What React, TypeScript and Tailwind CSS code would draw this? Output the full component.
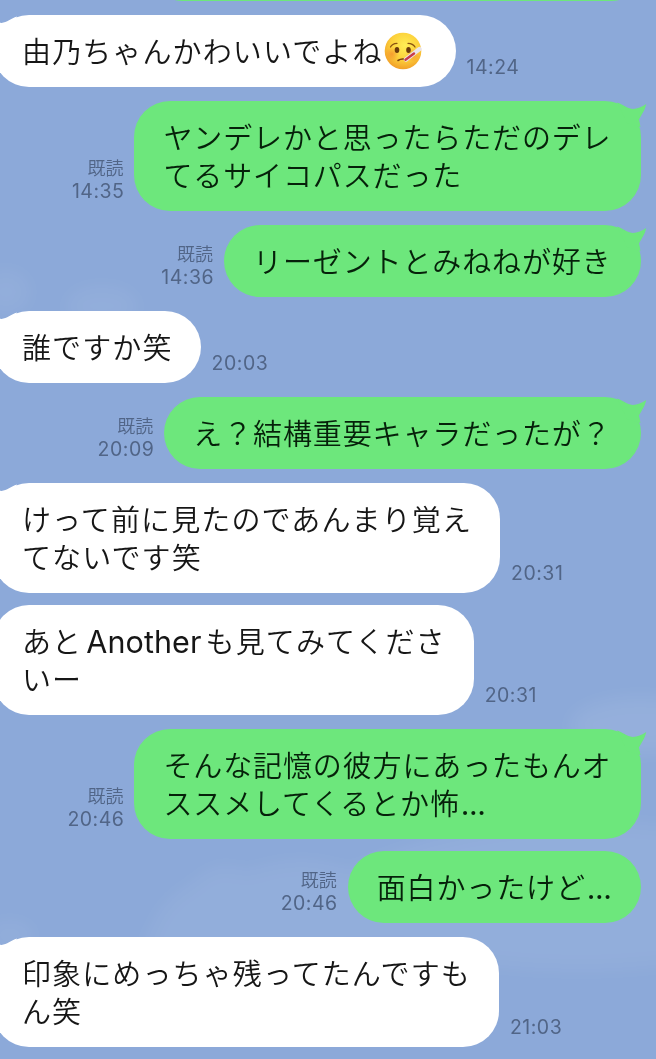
import { Fragment } from 'react';
import { clsx } from 'clsx';

interface Message {
  id: number;
  mine: boolean;
  lines: string[];
  time: string;
  tail?: boolean;
  emoji?: boolean;
}

const messages: Message[] = [
  { id: 1, mine: false, lines: ['由乃ちゃんかわいいでよね'], time: '14:24', tail: true, emoji: true },
  { id: 2, mine: true, lines: ['ヤンデレかと思ったらただのデレ', 'てるサイコパスだった'], time: '14:35', tail: true },
  { id: 3, mine: true, lines: ['リーゼントとみねねが好き'], time: '14:36', tail: true },
  { id: 4, mine: false, lines: ['誰ですか笑'], time: '20:03', tail: true },
  { id: 5, mine: true, lines: ['え？結構重要キャラだったが？'], time: '20:09', tail: true },
  { id: 6, mine: false, lines: ['けって前に見たのであんまり覚え', 'てないです笑'], time: '20:31', tail: true },
  { id: 7, mine: false, lines: ['あとAnotherも見てみてくださ', 'いー'], time: '20:31' },
  { id: 8, mine: true, lines: ['そんな記憶の彼方にあったもんオ', 'ススメしてくるとか怖...'], time: '20:46', tail: true },
  { id: 9, mine: true, lines: ['面白かったけど...'], time: '20:46' },
  { id: 10, mine: false, lines: ['印象にめっちゃ残ってたんですも', 'ん笑'], time: '21:03', tail: true },
];

function Clouds() {
  return (
    <svg className="absolute inset-0 h-full w-full" viewBox="0 0 656 1059" aria-hidden="true">
      <defs>
        <filter id="soft" x="-30%" y="-30%" width="160%" height="160%">
          <feGaussianBlur stdDeviation="9" />
        </filter>
      </defs>
      <g fill="#ffffff" filter="url(#soft)">
        <ellipse cx="6" cy="292" rx="24" ry="22" opacity="0.06" />
        <ellipse cx="102" cy="306" rx="36" ry="20" opacity="0.06" />
        <ellipse cx="640" cy="725" rx="70" ry="28" opacity="0.08" />
        <path d="M140 960 Q155 900 190 885 Q220 855 245 872 Q300 850 350 870 Q500 800 700 830 V960 Q560 985 400 950 Z" opacity="0.06" />
        <ellipse cx="10" cy="935" rx="24" ry="14" opacity="0.06" />
      </g>
    </svg>
  );
}

function ThermometerFace() {
  return (
    <svg className="mt-px mr-1.5 ml-px h-[38px] w-[38px]" viewBox="0 0 38 38">
      <defs>
        <radialGradient id="face" cx="0.55" cy="0.35" r="0.65">
          <stop offset="0" stopColor="#ffee55" />
          <stop offset="0.6" stopColor="#fcd03b" />
          <stop offset="1" stopColor="#f2a028" />
        </radialGradient>
        <radialGradient id="cheek">
          <stop offset="0" stopColor="#f58a2c" stopOpacity="0.7" />
          <stop offset="1" stopColor="#f58a2c" stopOpacity="0" />
        </radialGradient>
      </defs>
      <circle cx="19" cy="19" r="18.3" fill="url(#face)" />
      <circle cx="8" cy="22" r="7" fill="url(#cheek)" />
      <circle cx="29" cy="23" r="7" fill="url(#cheek)" />
      <ellipse cx="13" cy="18" rx="2.3" ry="3" fill="#6b3a0c" />
      <ellipse cx="24.5" cy="18" rx="2.3" ry="3" fill="#6b3a0c" />
      <path d="M6.5 15 Q8 11.5 13 11.3 M24 11.3 Q29 11.5 31 15" fill="none" stroke="#8a5312" strokeWidth="1.3" strokeLinecap="round" />
      <path d="M14 28.5 Q18 26 23 28" fill="none" stroke="#7a400e" strokeWidth="1.5" strokeLinecap="round" />
      <path d="M22 27.5 L35.5 17" stroke="#e9e4ea" strokeWidth="4.4" strokeLinecap="round" />
      <path d="M21.5 27.8 L30 21.5" stroke="#c93b4a" strokeWidth="2.4" strokeLinecap="round" />
    </svg>
  );
}

function Tail({ mine }: { mine: boolean }) {
  return (
    <svg
      className={clsx('absolute top-0 h-[26px] w-[30px]', mine ? '-right-1.5 text-[#6de77c]' : '-left-1.5 -scale-x-100 text-white')}
      viewBox="0 0 30 26"
      fill="currentColor"
    >
      <path d="M0 1.6 C6 3.5 10 7.8 15.5 7.9 C20 8 25 6 29.2 3 C28 9.5 24.5 13.5 22 18.5 Q23 22 23.4 26 L10 22 Z" />
    </svg>
  );
}

// Latin runs use a different face and size than the kana around them
function Line({ text }: { text: string }) {
  return (
    <>
      {text.split(/([A-Za-z.]+)/).map((part, i) => {
        if (/^[A-Za-z]/.test(part)) {
          return (
            <span key={i} className="mx-1 font-['Inter'] text-[30.5px] font-normal tracking-[0.1px]">{part}</span>
          );
        }
        if (part.startsWith('.')) {
          return <span key={i} className="ml-px font-['Inter'] text-[30px] font-normal tracking-[-0.4px]">{part}</span>;
        }
        return <Fragment key={i}>{part}</Fragment>;
      })}
    </>
  );
}

function MessageRow({ message }: { message: Message }) {
  const { mine, lines, time, tail, emoji } = message;

  return (
    <div
      className={clsx(
        'flex items-end gap-[11px]',
        mine ? 'flex-row-reverse pr-[15px]' : '-ml-[7px]',
        tail ? 'mt-3.5' : 'mt-3'
      )}
    >
      <div
        className={clsx(
          'relative rounded-[36px] pt-4 pb-[18px] pl-[29px]',
          mine
            ? 'bg-[#6de77c] pr-[29.5px] tracking-[0.87px] text-[#06210a]'
            : 'bg-white pr-7 tracking-[1.12px] text-[#161616]'
        )}
      >
        {tail && <Tail mine={mine} />}
        {lines.map((line) => (
          <div key={line} className="relative flex h-[38px] items-center text-[29px] leading-[38px] whitespace-nowrap">
            <span className="h-[38px]">
              <Line text={line} />
            </span>
            {emoji && <ThermometerFace />}
          </div>
        ))}
      </div>
      <div className={clsx('flex flex-col pb-2 text-[#516587]', mine ? '-mr-px items-end' : 'items-start')}>
        {mine && <span className="mr-px text-[18px] leading-6">既読</span>}
        <span className="font-['Inter'] text-[19.5px] leading-6 font-normal tracking-[0.5px]">{time}</span>
      </div>
    </div>
  );
}

export default function App() {
  return (
    <div
      lang="ja"
      className="relative h-[1059px] w-[656px] overflow-hidden bg-[#8ca9d9] font-['Noto_Sans_CJK_JP',sans-serif] font-[350]"
    >
      <Clouds />
      <div className="relative flex flex-col">
        <div className="-mt-[71px] mr-[9px] h-[72px] w-[500px] self-end rounded-[36px] bg-[#6de77c]" />
        {messages.map((message) => (
          <MessageRow key={message.id} message={message} />
        ))}
      </div>
    </div>
  );
}
